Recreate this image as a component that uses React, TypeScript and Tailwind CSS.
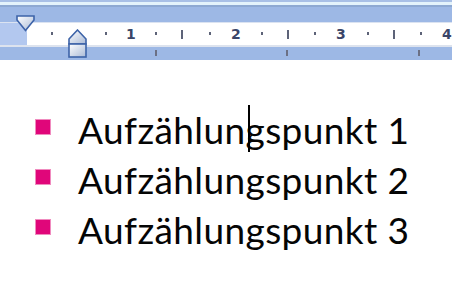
import React from "react";

const dots = [51, 105, 155, 209, 261, 314, 367, 420];
const tall = [181, 287, 393];
const nums: [number, string][] = [
  [130, "1"],
  [235, "2"],
  [340, "3"],
  [446, "4"],
];
const tabs = [155, 286, 418];

function Ruler() {
  return (
    <div className="relative h-[60px] w-full flex flex-col">
      <div className="h-[2px] bg-[#a9c0e6]" />
      <div className="h-[3px] bg-[#e4f3fb]" />
      <div className="h-[2px] bg-[#8ea9d2]" />
      <div className="h-[15px] bg-[#9db8e5]" />
      <div className="h-[1px] bg-[#dbe3f1]" />
      <div className="h-[22px] flex">
        <div className="w-[27px] bg-[#b3c8ef]" />
        <div className="flex-1 bg-white" />
      </div>
      <div className="h-[2px] bg-[#dde3ee]" />
      <div className="flex-1 bg-[#9db8e5]" />

      {dots.map((x) => (
        <div key={"d" + x} className="absolute top-[32px] w-[2px] h-[3px] bg-[#5d6378]" style={{ left: x }} />
      ))}
      {tall.map((x) => (
        <div key={"t" + x} className="absolute top-[30px] w-[2px] h-[9px] bg-[#5d6378]" style={{ left: x }} />
      ))}
      {tabs.map((x) => (
        <div key={"b" + x} className="absolute top-[50px] w-[2px] h-[6px] bg-[#6b7085]" style={{ left: x }} />
      ))}
      {nums.map(([x, n]) => (
        <div
          key={"n" + n}
          className="absolute top-[27px] text-[14px] leading-[14px] font-semibold text-[#3a4568] font-['DejaVu_Sans',sans-serif]"
          style={{ left: x - 4 }}
        >
          {n}
        </div>
      ))}

      {/* first line indent marker */}
      <svg className="absolute left-[16px] top-[15px]" width="19" height="17" viewBox="0 0 19 17">
        <defs>
          <linearGradient id="g1" x1="0" y1="0" x2="1" y2="1">
            <stop offset="0" stopColor="#ffffff" />
            <stop offset="1" stopColor="#a9bad6" />
          </linearGradient>
        </defs>
        <path d="M1 1 H18 V5 L9.5 15.5 L1 5 Z" fill="url(#g1)" stroke="#3d63a8" strokeWidth="1.6" />
      </svg>
      {/* hanging indent marker */}
      <svg className="absolute left-[68px] top-[29px]" width="19" height="29" viewBox="0 0 19 29">
        <defs>
          <linearGradient id="g2" x1="0" y1="0" x2="1" y2="1">
            <stop offset="0" stopColor="#ffffff" />
            <stop offset="1" stopColor="#a9bad6" />
          </linearGradient>
        </defs>
        <path d="M9.5 1 L18 10 V15 H1 V10 Z" fill="url(#g2)" stroke="#3d63a8" strokeWidth="1.6" />
        <rect x="1" y="15" width="17" height="13" fill="url(#g2)" stroke="#3d63a8" strokeWidth="1.6" />
      </svg>
    </div>
  );
}

function Item({ n, caret }: { n: number; caret?: boolean }) {
  return (
    <div className="h-[50px] flex items-center">
      <div className="w-[36px]" />
      <div className="w-[14px] h-[14px] bg-[#e0067a] outline outline-1 outline-[#f08bbf] -mt-[6px]" />
      <div className="w-[28px]" />
      <div className="text-[37px] tracking-[0.4px] leading-[50px] text-[#050505] font-['Lato',sans-serif] whitespace-nowrap">
        Aufzählun
        <span className="relative">
          {caret && <span className="absolute left-[2px] top-[-2px] w-[2px] h-[47px] bg-black" />}
          gspunkt {n}
        </span>
      </div>
    </div>
  );
}

export default function App() {
  return (
    <div className="w-[452px] h-[294px] bg-white overflow-hidden">
      <Ruler />
      <div className="pt-[45px] flex flex-col">
        <Item n={1} caret />
        <Item n={2} />
        <Item n={3} />
      </div>
    </div>
  );
}
